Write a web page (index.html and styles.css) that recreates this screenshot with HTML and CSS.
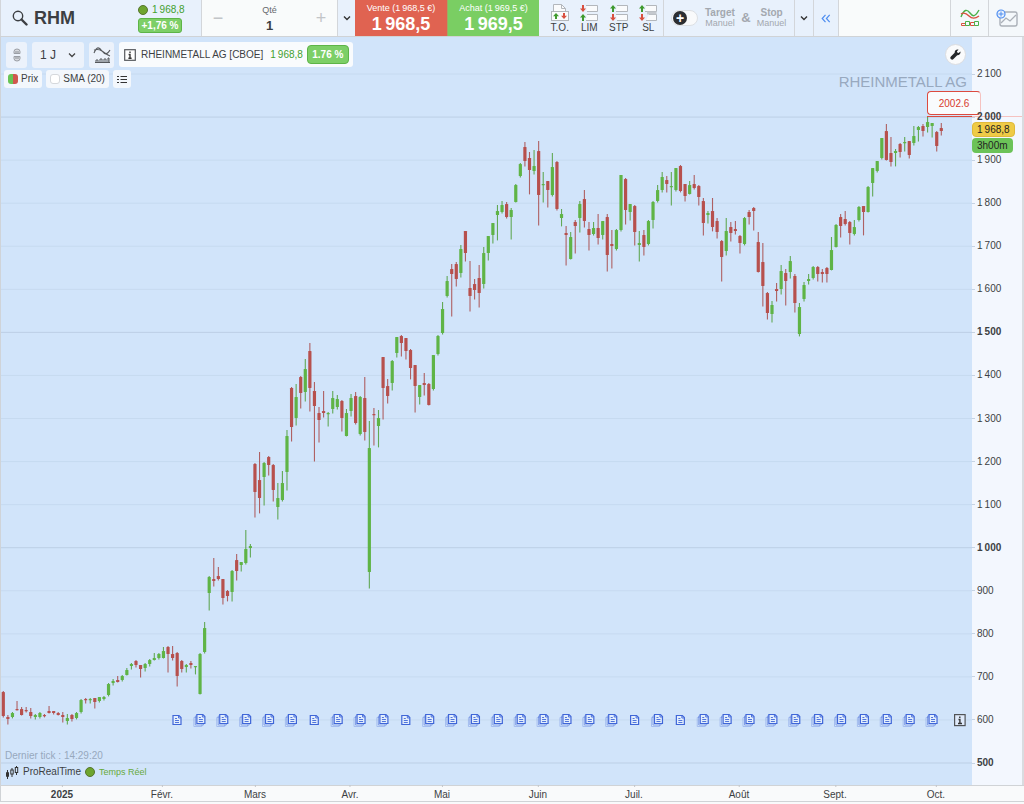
FILE: index.html
```html
<!DOCTYPE html>
<html lang="fr">
<head>
  <meta charset="UTF-8">
  <meta name="viewport" content="width=device-width, initial-scale=1">
  <title>RHM - RHEINMETALL AG</title>
  <link rel="stylesheet" href="styles.css">
</head>
<body>
  <header class="topbar">
    <div class="symbol">
      <svg class="loupe" width="16" height="16" viewBox="0 0 16 16"><circle cx="6" cy="6" r="4.7" fill="none" stroke="#3c3f43" stroke-width="1.4"/><path d="M9.5 9.5l5 5" stroke="#3c3f43" stroke-width="2.4" stroke-linecap="round"/></svg>
      <h1>RHM</h1>
      <div class="quote">
        <div class="last"><span class="dot"></span><span class="up">1&#8201;968,8</span></div>
        <span class="badge">+1,76 %</span>
      </div>
    </div>
    <div class="qty">
      <button aria-label="Moins">−</button>
      <div class="qty-field">
        <label for="qte">Qté</label>
        <input type="text" id="qte" value="1">
      </div>
      <button aria-label="Plus">+</button>
    </div>
    <button class="drop drop-qty" aria-label="Quantités"><svg width="8" height="6" viewBox="0 0 8 6"><path d="M1 1.5l3 3 3-3" fill="none" stroke="#333" stroke-width="1.4"/></svg></button>
    <button class="deal sell"><span>Vente (1&#8201;968,5 €)</span><strong>1&#8201;968,5</strong></button>
    <button class="deal buy"><span>Achat (1&#8201;969,5 €)</span><strong>1&#8201;969,5</strong></button>
    <div class="orders">
      <button>
        <svg width="20" height="19" viewBox="0 0 20 19"><path d="M3.5 9V1.5h8l4 4V9" fill="#fafbfc" stroke="#b3b7bc"/><path d="M11.5 1.5v4h4" fill="none" stroke="#b3b7bc"/><rect x="1.5" y="8.5" width="17" height="9" fill="#fafbfc" stroke="#b3b7bc"/><path d="M6 10l3 3.2H7V16H5v-2.8H3z" fill="#3f9a2e"/><path d="M14 16l3-3.2h-2V10h-2v2.8h-2z" fill="#d9503f"/></svg>
        T.O.
      </button>
      <button>
        <svg width="20" height="19" viewBox="0 0 20 19"><path d="M7 2.5h11.5v6H8M8 11.5h10.5v6H7" fill="#fafbfc" stroke="#b3b7bc"/><path d="M4 9l3-3.5H5V2H3v3.5H1z" fill="#d9503f"/><path d="M4 11l3 3.5H5V18H3v-3.5H1z" fill="#3f9a2e"/></svg>
        LIM
      </button>
      <button>
        <svg width="20" height="19" viewBox="0 0 20 19"><path d="M8 2.5h10.5v6H7M7 11.5h11.5v6H8" fill="#fafbfc" stroke="#b3b7bc"/><path d="M4 2l3 3.5H5V9H3V5.5H1z" fill="#3f9a2e"/><path d="M4 18l3-3.5H5V11H3v3.5H1z" fill="#d9503f"/></svg>
        STP
      </button>
      <button>
        <svg width="20" height="19" viewBox="0 0 20 19"><path d="M8 2.5h10.5v6H7M11 11.5h7.5v6H8" fill="#fafbfc" stroke="#b3b7bc"/><path d="M9 8.5h9.5v3H9z" fill="#c5c9ce"/><path d="M4 2l3 3.5H5V9H3V5.5H1z" fill="#3f9a2e"/><path d="M4 18l3-3.5H5V11H3v3.5H1z" fill="#d9503f"/></svg>
        SL
      </button>
    </div>
    <div class="target">
      <input type="checkbox" id="auto" class="switch" aria-label="Target et Stop">
      <label for="auto"><b>Target</b>Manuel</label>
      <span class="amp">&amp;</span>
      <label for="auto"><b>Stop</b>Manuel</label>
    </div>
    <button class="drop drop-target" aria-label="Options"><svg width="8" height="6" viewBox="0 0 8 6"><path d="M1 1.5l3 3 3-3" fill="none" stroke="#333" stroke-width="1.4"/></svg></button>
    <button class="drop drop-fold" aria-label="Replier"><svg width="10" height="9" viewBox="0 0 10 9"><path d="M4.5 .8L1.2 4.5l3.3 3.7M8.7 .8L5.4 4.5l3.3 3.7" fill="none" stroke="#4d8df0" stroke-width="1.2"/></svg></button>
    <div class="spacer"></div>
    <button class="tool" aria-label="Indicateurs">
      <svg width="20" height="18" viewBox="0 0 20 18"><path d="M1 8C4 0 7 0 10 4s5 4 9-3" fill="none" stroke="#4bb04a" stroke-width="1.4"/><path d="M1 5c3-2 5-1 8 2s6 3 10 0" fill="none" stroke="#d9503f" stroke-width="1.4"/><path d="M1.5 16.5v-2h4v2zM10.500 16.500v-3h4v3z" fill="none" stroke="#d9503f"/><path d="M5.5 16.5v-4h4v4zM14.500 16.500v-4h4v4z" fill="none" stroke="#4bb04a"/></svg>
    </button>
    <button class="tool new-chart" aria-label="Nouveau graphique">
      <svg width="22" height="20" viewBox="0 0 22 20"><rect x="4" y="4" width="17" height="14" rx="2" fill="none" stroke="#aab0b8" stroke-width="1.4"/><path d="M5 15l5-5 4 3 6-6" fill="none" stroke="#aab0b8" stroke-width="1.3"/><circle cx="5" cy="6" r="4" fill="#eaf2fd" stroke="#4d8df0" stroke-width="1.2"/><path d="M5 3.500v5M2.500 6h5" stroke="#4d8df0"/></svg>
    </button>
  </header>

  <main class="workspace">
    <section class="plot">
      <svg id="chart"></svg>
      <div class="overlay">
        <div class="controls">
          <button class="box link" aria-label="Lier"><svg width="8" height="14" viewBox="0 0 8 14"><path d="M1 5.500v-2Q1 1 4 1t3 2.500v2zM1 8.500v2Q1 13 4 13t3-2.500v-2z" fill="#d8dbe0" stroke="#9a9ea5"/><path d="M2 4h4M2 10h4" stroke="#8d9198"/></svg></button>
          <div class="box frame">
            <select aria-label="Unité de temps"><option>1 J</option><option>1 S</option><option>1 M</option></select>
            <svg width="8" height="6" viewBox="0 0 8 6"><path d="M1 1.5l3 3 3-3" fill="none" stroke="#444" stroke-width="1.3"/></svg>
          </div>
          <button class="box ind" aria-label="Ajouter un indicateur"><svg width="18" height="18" viewBox="0 0 18 18"><path d="M1 7c3-7 5-6 8-2s5 4 8-1M1 4c3-1 5-1 8 1s5 4 8 5" fill="none" stroke="#55585c" stroke-width="1.1"/><path d="M2 16.500h15M3 16v-2h2v2M7 16v-3h2v3M11 16v-3h2v3M15 16v-4h1v4" fill="none" stroke="#55585c"/></svg></button>
          <div class="box title">
            <svg width="12" height="12" viewBox="0 0 12 12"><rect x=".7" y=".7" width="10.6" height="10.6" fill="#fff" stroke="#55585c" stroke-width="1.2"/><path d="M6 2.5v1.600M4.600 5.500H6V9M4.400 9.200h3.200" fill="none" stroke="#333" stroke-width="1.4"/></svg>
            <span class="name">RHEINMETALL AG [CBOE]</span>
            <span class="up">1&#8201;968,8</span>
            <span class="badge">1.76 %</span>
          </div>
        </div>
        <div class="legend">
          <button class="chip price"><span class="swatch"></span>Prix</button>
          <label class="chip sma"><input type="checkbox">SMA (20)</label>
          <button class="chip" aria-label="Liste"><svg width="10" height="9" viewBox="0 0 10 9"><path d="M0 1.500h2M0 4.500h2M0 7.500h2M3.500 1.500H10M3.500 4.500H10M3.500 7.500H10" stroke="#333" stroke-width="1.1"/></svg></button>
        </div>
        <div class="status">
          <p class="tick">Dernier tick : 14:29:20</p>
          <p class="brand">
            <svg width="14" height="15" viewBox="0 0 14 15"><path d="M2.5 5v9M7 3v9M11.500 1v9" stroke="#333"/><rect x="1" y="7" width="3" height="5" rx="1" fill="#333"/><rect x="5.800" y="5" width="2.400" height="4" fill="#d1e4fa" stroke="#333"/><rect x="10.300" y="2.500" width="2.400" height="5" fill="#d1e4fa" stroke="#333"/></svg>
            <span>ProRealTime</span><span class="dot"></span><span class="live">Temps Réel</span>
          </p>
        </div>
      </div>
      <button class="settings" aria-label="Réglages"><svg width="11" height="11" viewBox="0 0 12 12"><path d="M11.3 2.6L9.5 4.3 7.900 3.900 7.600 2.400 9.300.700C7.300 0 4.900 1.300 5.100 4L1 8.100a1.900 1.900 0 1 0 2.800 2.800L7.900 6.800c2.500.300 4.200-2.100 3.400-4.200z" fill="#26282b"/></svg></button>
      <span class="watermark">RHEINMETALL AG</span>
    </section>
    <aside class="prices">
      <span class="high">2002.6</span>
      <ol id="scale"></ol>
      <span class="tag now">1&#8201;968,8</span>
      <span class="tag left">3h00m</span>
    </aside>
  </main>

  <footer class="dates"><div id="months"></div></footer>
  <div class="base"></div>

  <script src="chart.js"></script>
</body>
</html>
```

FILE: styles.css
```css
* { box-sizing: border-box; }
body { margin: 0; min-height: 100vh; display: flex; flex-direction: column; font-family: "Liberation Sans", Arial, sans-serif; font-size: 10px; line-height: 12px; color: #3c3f43; background: #f9fafb; }
button, input, select { font: inherit; color: inherit; border: 0; padding: 0; margin: 0; background: none; }
button { cursor: pointer; }
svg { flex: none; }
h1, p, ol { margin: 0; padding: 0; }
.up { color: #43a02e; }
.dot { width: 10px; height: 10px; border-radius: 50%; background: #6ea52f; border: 1px solid #56752d; }
.badge { background: #7dcf67; border: 1px solid #5db447; border-radius: 3px; color: #fff; font-weight: bold; text-align: center; white-space: nowrap; }

/* top bar */
.topbar { display: flex; height: 37px; background: #e8f1fc; border-bottom: 1px solid #d0d3d6; }
.topbar > * { flex: none; }
.symbol { width: 202px; display: flex; align-items: center; padding-left: 11px; border-right: 1px solid #d3d6da; border-left: 1px solid #d3d6da; }
.symbol h1 { font-size: 18px; line-height: 20px; margin-left: 6px; width: 104px; }
.quote { display: flex; flex-direction: column; gap: 2px; }
.last { display: flex; align-items: center; gap: 4px; line-height: 13px; }
.quote .badge { width: 44px; line-height: 13px; }
.qty { width: 136px; display: flex; align-items: center; justify-content: space-between; padding: 0 10px; background: #f9fbfb; border-right: 1px solid #d3d6da; }
.qty button { color: #c2c5c8; font-size: 18px; width: 12px; }
.qty-field { display: flex; flex-direction: column; align-items: center; gap: 2px; padding-top: 2px; }
.qty-field label { font-size: 9px; color: #66696d; }
.qty-field input { width: 40px; text-align: center; font-size: 13px; line-height: 16px; height: 16px; font-weight: bold; }
.drop { display: flex; align-items: center; justify-content: center; border-right: 1px solid #d3d6da; }
.drop-qty { width: 17px; border-right: 0; }
.drop-target { width: 19px; }
.drop-fold { width: 25px; }
.deal { width: 92px; height: 36px; color: #fff; display: flex; flex-direction: column; align-items: center; justify-content: center; }
.deal span { font-size: 9px; line-height: 12px; }
.deal strong { font-size: 18px; line-height: 20px; }
.sell { background: #e06351; }
.buy { background: #7ace63; border-left: 1px solid #a1a863; }
.orders { width: 125px; display: flex; padding: 3px 0 0 6px; border-right: 1px solid #d3d6da; }
.orders button { width: 30px; display: flex; flex-direction: column; align-items: center; line-height: 11px; }
.target { width: 131px; display: flex; align-items: center; color: #a3a8af; border-right: 1px solid #d3d6da; padding-left: 7px; }
.target label { font-size: 9px; line-height: 11px; text-align: center; }
.target b { display: block; font-size: 10px; }
.amp { font-size: 13px; font-weight: bold; width: 22px; text-align: center; }
.switch { appearance: none; width: 27px; height: 16px; border-radius: 8px; background: #f9fafb; border: 1px solid #dde0e4; margin-right: 7px; position: relative; }
.switch::before { content: "+"; position: absolute; left: 1px; top: 0; width: 14px; height: 14px; border-radius: 50%; background: #2c2e31; color: #fff; font-size: 14px; font-weight: bold; line-height: 14px; text-align: center; }
.topbar .spacer { flex: 1; background: #f9fbfb; }
.tool { width: 38px; background: #f4f8fb; border-left: 1px solid #d3d6da; display: flex; align-items: center; justify-content: center; }
.new-chart { width: 36px; }

/* chart */
.workspace { flex: 1; display: flex; min-height: 400px; border-left: 1px solid #cfd3d8; }
.plot { flex: 1; position: relative; background: #d1e4fa; overflow: hidden; }
#chart { position: absolute; left: 0; top: 0; width: 100%; height: 100%; }
.overlay { position: absolute; inset: 5px 0 0 0; display: flex; flex-direction: column; align-items: flex-start; pointer-events: none; }
.overlay button, .overlay select, .overlay label { pointer-events: auto; }
.controls { display: flex; gap: 5px; padding-left: 5px; }
.box { height: 26px; border-radius: 3px; background: #ecf2fb; display: flex; align-items: center; justify-content: center; }
.link { width: 21px; }
.frame { width: 52px; gap: 8px; }
.frame select { appearance: none; font-size: 12px; width: 20px; height: 20px; }
.ind { width: 25px; }
.title { height: 25px; background: #f9fbfd; padding: 0 4px 0 5px; gap: 5px; }
.title .up { margin-left: 2px; }
.title .badge { width: 42px; line-height: 17px; margin-left: -1px; border-radius: 4px; }
.legend { display: flex; gap: 4px; padding: 2px 0 0 3px; }
.chip { height: 18px; border-radius: 3px; background: #f3f7fc; display: flex; align-items: center; padding: 0 4px; gap: 3px; }
.swatch { width: 10px; height: 10px; border-radius: 3px; background: linear-gradient(90deg, #68c455 50%, #d0574e 50%); }
.sma input { appearance: none; width: 10px; height: 10px; border: 1px solid #d5d8dc; border-radius: 3px; background: #fff; }
.status { margin-top: auto; padding: 0 0 4px 4px; }
.tick { color: #97a8bd; line-height: 14px; }
.brand { display: flex; align-items: center; gap: 4px; height: 18px; }
.live { color: #67a93a; font-size: 9px; }
.settings { position: absolute; right: 6px; top: 7px; width: 21px; height: 21px; border-radius: 50%; background: #fafbfc; border: 1px solid #dcdde0; display: flex; align-items: center; justify-content: center; }
.watermark { position: absolute; right: 5px; top: 36px; font-size: 15px; line-height: 18px; color: #98a9bf; }

/* price scale */
.prices { width: 52px; position: relative; background: #f3f7fe; border-right: 2px solid #d9dce0; }
#scale { position: relative; list-style: none; height: 100%; padding: 27px 0 12px; display: flex; flex-direction: column; justify-content: space-between; }
#scale li { display: flex; align-items: center; gap: 2px; line-height: 20px; }
#scale li::before { content: ""; width: 3px; height: 1px; background: #c6d3e3; }
#scale .major { font-weight: bold; }
.high { position: absolute; left: -45px; top: 54px; width: 54px; height: 24px; border: 1px solid #dc4a3f; border-right-color: #f5c2c0; border-radius: 4px; background: #f9fbfd; color: #d83a2e; line-height: 24px; text-align: center; }
.high::after { content: ""; position: absolute; left: -1px; top: 24px; width: 95px; height: 1px; background: linear-gradient(90deg, #dc4a3f 45px, #f5c2c0 45px); }
.tag { position: absolute; left: 0; height: 15px; line-height: 15px; border-radius: 4px; padding-left: 5px; color: #222; }
.now { top: 85px; width: 43px; background: #efcb46; border: 1px solid #dfb93a; line-height: 14px; padding-left: 4px; }
.left { top: 101px; width: 41px; background: #6cc358; }

/* date scale */
.dates { height: 16px; border-top: 1px solid #d0d3d6; border-left: 1px solid #d0d3d6; padding-right: 52px; }
#months { position: relative; height: 15px; }
#months span { position: absolute; top: 2px; line-height: 13px; transform: translateX(-50%); }
#months span::before { content: ""; position: absolute; left: 50%; top: -3px; width: 1px; height: 2px; background: #c3c6ca; }
#months .year { font-weight: bold; }
.base { height: 3px; border-top: 1px solid #d0d3d6; }
```

FILE: chart.js
```js
// one row per day: direction, high, body top, body bottom, low (chart units)
const days = `
r 691 692 716 717|r 715 717 719 724|g 712 713 717 718|r 701 709 710 710|r 707 709 715 715
r 707 710 711 712|r 708 712 716 718|g 714 715 717 719|g 712 713 717 718|r 714 715 716 717
r 706 711 713 713|r 711 711 713 714|r 712 713 715 715|r 712 715 717 722|g 714 718 721 724
r 714 715 719 721|g 712 713 718 719|g 699 700 712 713|r 698 699 700 703|g 698 699 700 703
r 698 698 702 708|g 697 697 701 702|g 696 697 699 700|g 683 684 695 696|g 679 681 683 685
r 676 680 682 682|g 675 676 680 681|g 668 670 675 675|g 663 664 666 669|r 660 661 665 667
r 665 665 669 677|g 663 664 668 671|g 659 660 664 666|g 653 658 660 660|g 653 654 658 659
g 647 651 658 658|r 646 647 654 672|r 646 654 658 660|r 652 653 676 686|r 660 661 669 672
g 664 665 667 672|r 661 663 665 668|g 666 666 667 674|g 653 654 694 694|g 622 628 652 653
g 576 577 593 610|r 558 579 581 586|r 567 576 579 580|r 579 579 598 604|r 590 591 596 601
g 570 571 592 601|r 554 560 571 580|g 562 562 565 571|g 530 549 563 564|g 544 546 548 557
r 463 464 492 517|r 452 480 498 513|g 462 463 477 505|r 456 457 465 475|r 464 465 490 501
g 483 498 507 519|g 471 483 500 501|g 430 436 472 490|r 387 388 427 441|g 384 397 418 425
r 376 377 393 408|g 359 369 392 401|r 343 351 388 411|r 382 391 406 461|r 407 413 420 442
r 391 411 413 417|g 412 413 414 426|g 391 398 409 413|g 395 399 407 409|r 400 401 418 431
g 409 413 436 436|g 394 398 411 416|r 392 396 423 424|g 396 397 434 435|r 377 398 432 440
g 421 448 572 588|r 408 414 415 445|g 410 418 426 447|r 357 357 388 419|r 379 386 396 403
g 360 361 383 390|g 337 337 353 357|r 335 336 343 356|r 338 338 351 359|r 349 350 368 379
r 365 365 386 412|g 385 385 397 404|r 373 383 385 395|r 383 384 405 405|g 355 355 389 390
g 335 336 354 355|g 302 309 333 334|g 276 281 296 297|r 264 269 274 316|r 262 264 279 286
g 245 249 273 277|r 231 231 253 261|r 261 288 296 311|r 279 284 290 299|r 265 278 293 307
g 247 253 284 288|g 236 236 253 260|g 223 223 235 243|g 205 211 215 240|g 201 205 212 213
r 202 204 217 218|g 208 210 217 239|g 184 185 202 202|g 163 164 176 177|r 142 147 161 166
r 152 158 170 194|g 150 166 171 174|r 141 151 195 225|g 172 184 185 202|r 181 181 190 207
g 153 167 195 196|r 161 162 209 210|g 209 214 218 226|r 226 233 235 265|g 232 237 259 259
r 220 222 226 253|g 201 204 218 232|r 190 199 221 227|r 222 229 235 250|g 222 228 234 235
r 214 228 238 244|g 221 221 235 239|r 214 217 255 271|r 230 244 246 268|g 229 230 249 250
g 175 175 230 231|r 178 179 210 224|g 204 204 212 220|r 205 206 232 245|g 231 243 245 261
r 230 235 247 255|g 220 221 244 245|g 201 202 220 228|g 185 190 201 202|g 172 177 190 192
r 176 180 184 192|g 172 186 187 205|g 168 168 190 191|r 165 166 191 192|r 184 184 196 201
g 181 185 194 194|r 175 184 188 189|r 185 186 197 205|r 198 201 223 235|g 211 213 215 223
r 198 211 227 231|r 218 221 232 238|r 240 241 257 281|g 218 231 251 255|r 222 227 233 241
r 221 229 231 234|r 235 236 243 253|g 217 218 244 245|r 210 212 217 224|r 207 208 211 230
r 232 242 272 272|r 243 262 286 306|r 292 293 313 319|g 301 305 314 322|r 283 289 291 301
g 265 271 289 294|r 269 273 281 305|g 256 261 272 278|r 274 276 303 312|g 303 307 334 336
g 282 285 299 301|g 274 279 281 284|g 266 267 278 279|r 266 267 274 281|r 269 272 274 282
r 267 268 274 282|g 237 250 270 270|g 224 225 247 247|r 214 217 226 237|r 211 219 224 225
r 221 222 233 244|g 220 227 234 235|g 206 207 220 221|r 206 206 212 235|g 186 187 212 212
g 168 168 183 196|g 161 161 171 172|g 138 138 158 159|r 124 131 160 160|r 137 153 162 166
g 149 151 153 166|r 143 144 152 157|g 137 142 143 151|r 141 141 155 158|g 126 136 143 145
g 126 127 130 141|r 124 126 131 136|g 117 122 127 132|g 123 123 126 137|r 131 132 146 151
r 123 128 131 135`.trim().split(/[|\n]/).map(row => row.split(' '));

const months = [['2025', 61], ['Févr.', 161], ['Mars', 254], ['Avr.', 349], ['Mai', 441], ['Juin', 537], ['Juil.', 633], ['Août', 738], ['Sept.', 834], ['Oct.', 935]];
const singleNews = [0, 6, 10, 20, 22];
const colors = { g: ['#5fb446', '#4f9f3a'], r: ['#b7504d', '#a94a49'] };
const W = 971, H = 748, TOP = 37;

const svg = document.getElementById('chart');

function draw() {
  const kx = svg.clientWidth / W;
  const ky = svg.clientHeight / H;
  const X = x => x * kx;
  const Y = y => (y - TOP) * ky;
  let out = '';

  // grid, ticks evenly spread between the first and last price label
  for (let i = 0; i < 17; i++) {
    const y = 37 + i * (svg.clientHeight - 59) / 16;
    const strong = (2100 - i * 100) % 500 === 0;
    out += `<path d="M0 ${y}H${svg.clientWidth}" stroke="${strong ? '#bccfe5' : '#c6daf0'}"/>`;
  }

  days.forEach(([dir, high, top, bottom, low], i) => {
    const x = X(2.3 + i * 4.5756);
    const [body, wick] = colors[dir];
    out += `<path d="M${x} ${Y(high)}V${Y(+low + 0.4)}" stroke="${wick}" stroke-width="1.1" opacity=".85"/>`;
    out += `<rect x="${x - 1.6}" y="${Y(top)}" width="3.2" height="${Math.max(1.2, Y(bottom) - Y(top))}" rx=".5" fill="${body}"/>`;
  });

  // news markers
  const sheet = 'h6l2 2v7h-8z';
  for (let i = 0; i < 34; i++) {
    const single = singleNews.includes(i);
    const x = X(176 + i * 22.88) + (single ? 0 : 1);
    const y = Y(720);
    out += `<g transform="translate(${x - 4} ${y - (single ? 4.5 : 5.5)})" fill="#e3eefc" stroke="#3f66d8">`;
    if (!single) out += `<path d="M-3 3${sheet}" opacity=".3"/><path d="M-1.5 1.5${sheet}" opacity=".55"/>`;
    out += `<path d="M0 0${sheet}" stroke-width="1.2"/><path d="M2 3h2M2 5h4M2 7h4M5.5 .5V2.500h2" fill="none" stroke-width=".9"/></g>`;
  }

  out += `<g transform="translate(${X(953)} ${Y(714)})"><rect x=".6" y=".6" width="10.5" height="11" fill="#dfeafa" stroke="#505356" stroke-width="1.2"/><path d="M5.8 2.5v1.5M4.5 5.5h1.4v3.7M4 9.5h4" fill="none" stroke="#333" stroke-width="1.4"/></g>`;
  svg.innerHTML = out;
}

const scale = document.getElementById('scale');
for (let p = 2100; p >= 500; p -= 100) {
  const text = p >= 1000 ? Math.floor(p / 1000) + '\u2009' + String(p % 1000).padStart(3, '0') : p;
  scale.innerHTML += `<li class="${p % 500 ? '' : 'major'}">${text}</li>`;
}

document.getElementById('months').innerHTML = months.map(([name, x]) =>
  `<span class="${name === '2025' ? 'year' : ''}" style="left:${(x / W * 100).toFixed(2)}%">${name}</span>`).join('');

draw();
window.addEventListener('resize', draw);
```
